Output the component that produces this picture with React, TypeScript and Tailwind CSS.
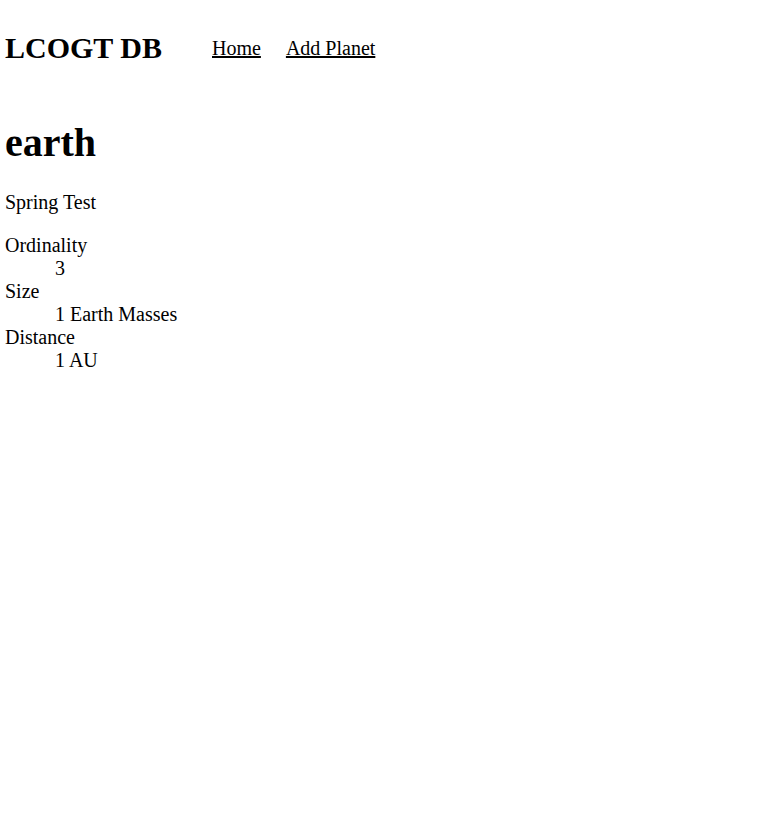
import React from "react";

export default function App() {
  return (
    <div className="min-h-[818px] bg-white text-black px-[5px] pt-[31px]" style={{ fontFamily: '"Liberation Serif", serif' }}>
      <header className="flex items-center">
        <h2 className="text-[30px] font-bold leading-[34px] m-0">LCOGT DB</h2>
        <nav className="flex items-center gap-[25px] ml-[50px] text-[20px] leading-[23px]">
          <a href="#" className="underline text-black">Home</a>
          <a href="#" className="underline text-black">Add Planet</a>
        </nav>
      </header>
      <h1 className="text-[40px] font-bold leading-[46px] mt-[55px]">earth</h1>
      <p className="text-[20px] leading-[23px] mt-[25px]">Spring Test</p>
      <dl className="text-[20px] leading-[23px] mt-[20px]">
        <dt>Ordinality</dt>
        <dd className="ml-[50px]">3</dd>
        <dt>Size</dt>
        <dd className="ml-[50px]">1 Earth Masses</dd>
        <dt>Distance</dt>
        <dd className="ml-[50px]">1 AU</dd>
      </dl>
    </div>
  );
}
